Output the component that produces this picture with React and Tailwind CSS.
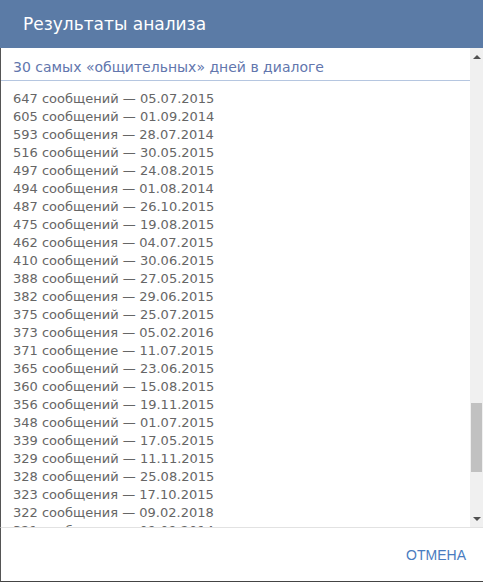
const rows = [
  ["647 сообщений", "05.07.2015"],
  ["605 сообщений", "01.09.2014"],
  ["593 сообщения", "28.07.2014"],
  ["516 сообщений", "30.05.2015"],
  ["497 сообщений", "24.08.2015"],
  ["494 сообщения", "01.08.2014"],
  ["487 сообщений", "26.10.2015"],
  ["475 сообщений", "19.08.2015"],
  ["462 сообщения", "04.07.2015"],
  ["410 сообщений", "30.06.2015"],
  ["388 сообщений", "27.05.2015"],
  ["382 сообщения", "29.06.2015"],
  ["375 сообщений", "25.07.2015"],
  ["373 сообщения", "05.02.2016"],
  ["371 сообщение", "11.07.2015"],
  ["365 сообщений", "23.06.2015"],
  ["360 сообщений", "15.08.2015"],
  ["356 сообщений", "19.11.2015"],
  ["348 сообщений", "01.07.2015"],
  ["339 сообщений", "17.05.2015"],
  ["329 сообщений", "11.11.2015"],
  ["328 сообщений", "25.08.2015"],
  ["323 сообщения", "17.10.2015"],
  ["322 сообщения", "09.02.2018"],
  ["321 сообщение", "09.09.2014"],
  ["320 сообщений", "02.06.2015"],
];

export default function App() {
  return (
    <div className="w-[483px] h-[582px] flex flex-col bg-white overflow-hidden font-['DejaVu_Sans',sans-serif]">
      {/* Header */}
      <div className="h-[48px] shrink-0 bg-[#5b7ba6] flex items-center pl-[23px]">
        <h1 className="text-white text-[17px] leading-none">Результаты анализа</h1>
      </div>

      {/* Body */}
      <div className="flex-1 flex min-h-0 border-l border-[#555]">
        <div className="flex-1 overflow-hidden">
          <div className="h-[33px] border-b border-[#b5c6e0] flex items-end pb-[6px] pl-[12px]">
            <span className="text-[#6276ad] text-[14px] leading-none">
              30 самых «общительных» дней в диалоге
            </span>
          </div>
          <ul className="pt-[9px] pl-[12px]">
            {rows.map(([count, date], index) => (
              <li key={index} className="text-[13px] leading-[18px] text-[#666]">
                {count} — {date}
              </li>
            ))}
          </ul>
        </div>

        {/* Scrollbar */}
        <div className="w-[13px] shrink-0 bg-[#f0f0f0] flex flex-col items-center">
          <div className="h-[17px] flex items-center justify-center">
            <div className="w-0 h-0 border-l-[4px] border-r-[4px] border-b-[4px] border-l-transparent border-r-transparent border-b-[#505050]" />
          </div>
          <div className="flex-1 w-full px-[1px] pt-[338px]">
            <div className="h-[69px] bg-[#c1c1c1]" />
          </div>
          <div className="h-[17px] flex items-center justify-center">
            <div className="w-0 h-0 border-l-[4px] border-r-[4px] border-t-[4px] border-l-transparent border-r-transparent border-t-[#505050]" />
          </div>
        </div>
      </div>

      {/* Footer */}
      <div className="h-[55px] shrink-0 border-t border-[#e2e2e2] border-l border-l-[#555] border-b border-b-[#444] flex items-center justify-end pr-[17px]">
        <button className="text-[#4a7cc0] text-[14px] font-['Liberation_Sans',sans-serif] leading-none">
          ОТМЕНА
        </button>
      </div>
    </div>
  );
}
